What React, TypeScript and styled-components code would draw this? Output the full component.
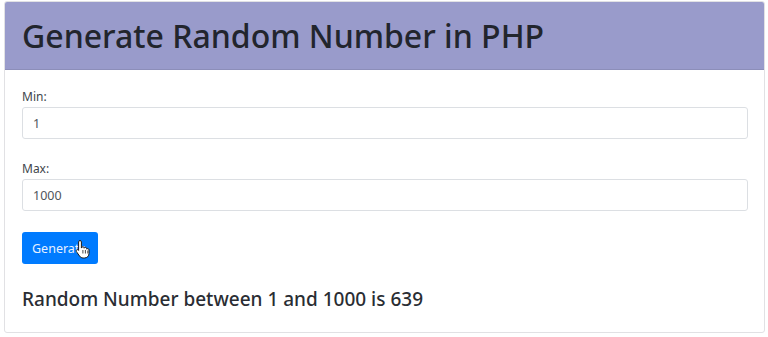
import React from "react";
import styled, { createGlobalStyle } from "styled-components";

const Global = createGlobalStyle`
  html, body { margin: 0; padding: 0; background: #ffffff; }
  body { font-family: "Noto Sans", "Open Sans", Arial, sans-serif; color: #212529; }
  * { box-sizing: border-box; }
`;

const Page = styled.div`
  padding: 1px 3px 4px 4px;
`;

const Card = styled.div`
  border: 1px solid #e1e1e4;
  border-radius: 3px;
  height: 332px;
  overflow: hidden;
  background: #fff;
`;

const Header = styled.div`
  height: 68px;
  background: #999bcb;
  border-bottom: 1px solid #8c8eb9;
  display: flex;
  align-items: center;
  padding: 0 17px;
`;

const Title = styled.h1`
  margin: 0;
  font-size: 32px;
  font-weight: 500;
  color: #22252d;
  letter-spacing: 0;
`;

const Body = styled.div`
  padding: 17px 16px 0 17px;
  display: flex;
  flex-direction: column;
`;

const Group = styled.div`
  display: flex;
  flex-direction: column;
  margin-bottom: 20px;
`;

const Label = styled.label`
  font-size: 12px;
  line-height: 19px;
  color: #41464b;
  margin-bottom: 1px;
`;

const Input = styled.div`
  height: 32px;
  border: 1px solid #dcdfe3;
  border-radius: 3px;
  padding: 0 10px;
  display: flex;
  align-items: center;
  font-size: 12.5px;
  color: #50555b;
`;

const ButtonRow = styled.div`
  display: flex;
  margin-top: 1px;
`;

const Button = styled.div`
  position: relative;
  width: 76px;
  height: 32px;
  background: #007bff;
  border-radius: 3px;
  color: #e8f1ff;
  font-size: 12.5px;
  display: flex;
  align-items: center;
  padding-left: 10px;
`;

const Cursor = styled.svg`
  position: absolute;
  left: 53px;
  top: 7px;
  width: 16px;
  height: 20px;
`;

const Result = styled.h4`
  margin: 22px 0 0 0;
  font-size: 19px;
  font-weight: 500;
  color: #2a2d33;
`;

export default function App() {
  return (
    <>
      <Global />
      <Page>
        <Card>
          <Header>
            <Title>Generate Random Number in PHP</Title>
          </Header>
          <Body>
            <Group>
              <Label>Min:</Label>
              <Input>1</Input>
            </Group>
            <Group>
              <Label>Max:</Label>
              <Input>1000</Input>
            </Group>
            <ButtonRow>
              <Button>
                Generate
                <Cursor viewBox="0 0 16 20">
                  <path
                    d="M5 1.5c.8 0 1.4.6 1.4 1.4V9l.2-.1c0-.7.6-1.2 1.3-1.2s1.3.5 1.3 1.2v.3c.2-.5.7-.8 1.2-.8.7 0 1.3.5 1.3 1.2v.6c.2-.4.6-.6 1.1-.6.7 0 1.2.5 1.2 1.2v3.6c0 2.6-1.8 4.6-4.6 4.6H8.2c-1.6 0-2.7-.7-3.6-1.9L1.4 12.6c-.4-.6-.3-1.3.2-1.7.6-.4 1.3-.3 1.8.2l.2.3V2.9c0-.8.6-1.4 1.4-1.4z"
                    fill="#ffffff"
                    stroke="#1a1a1a"
                    strokeWidth="1"
                  />
                  <path d="M7.9 11v3.5M10.4 11v3.5M12.8 11.5v3" stroke="#1a1a1a" strokeWidth="0.8" />
                </Cursor>
              </Button>
            </ButtonRow>
            <Result>Random Number between 1 and 1000 is 639</Result>
          </Body>
        </Card>
      </Page>
    </>
  );
}
